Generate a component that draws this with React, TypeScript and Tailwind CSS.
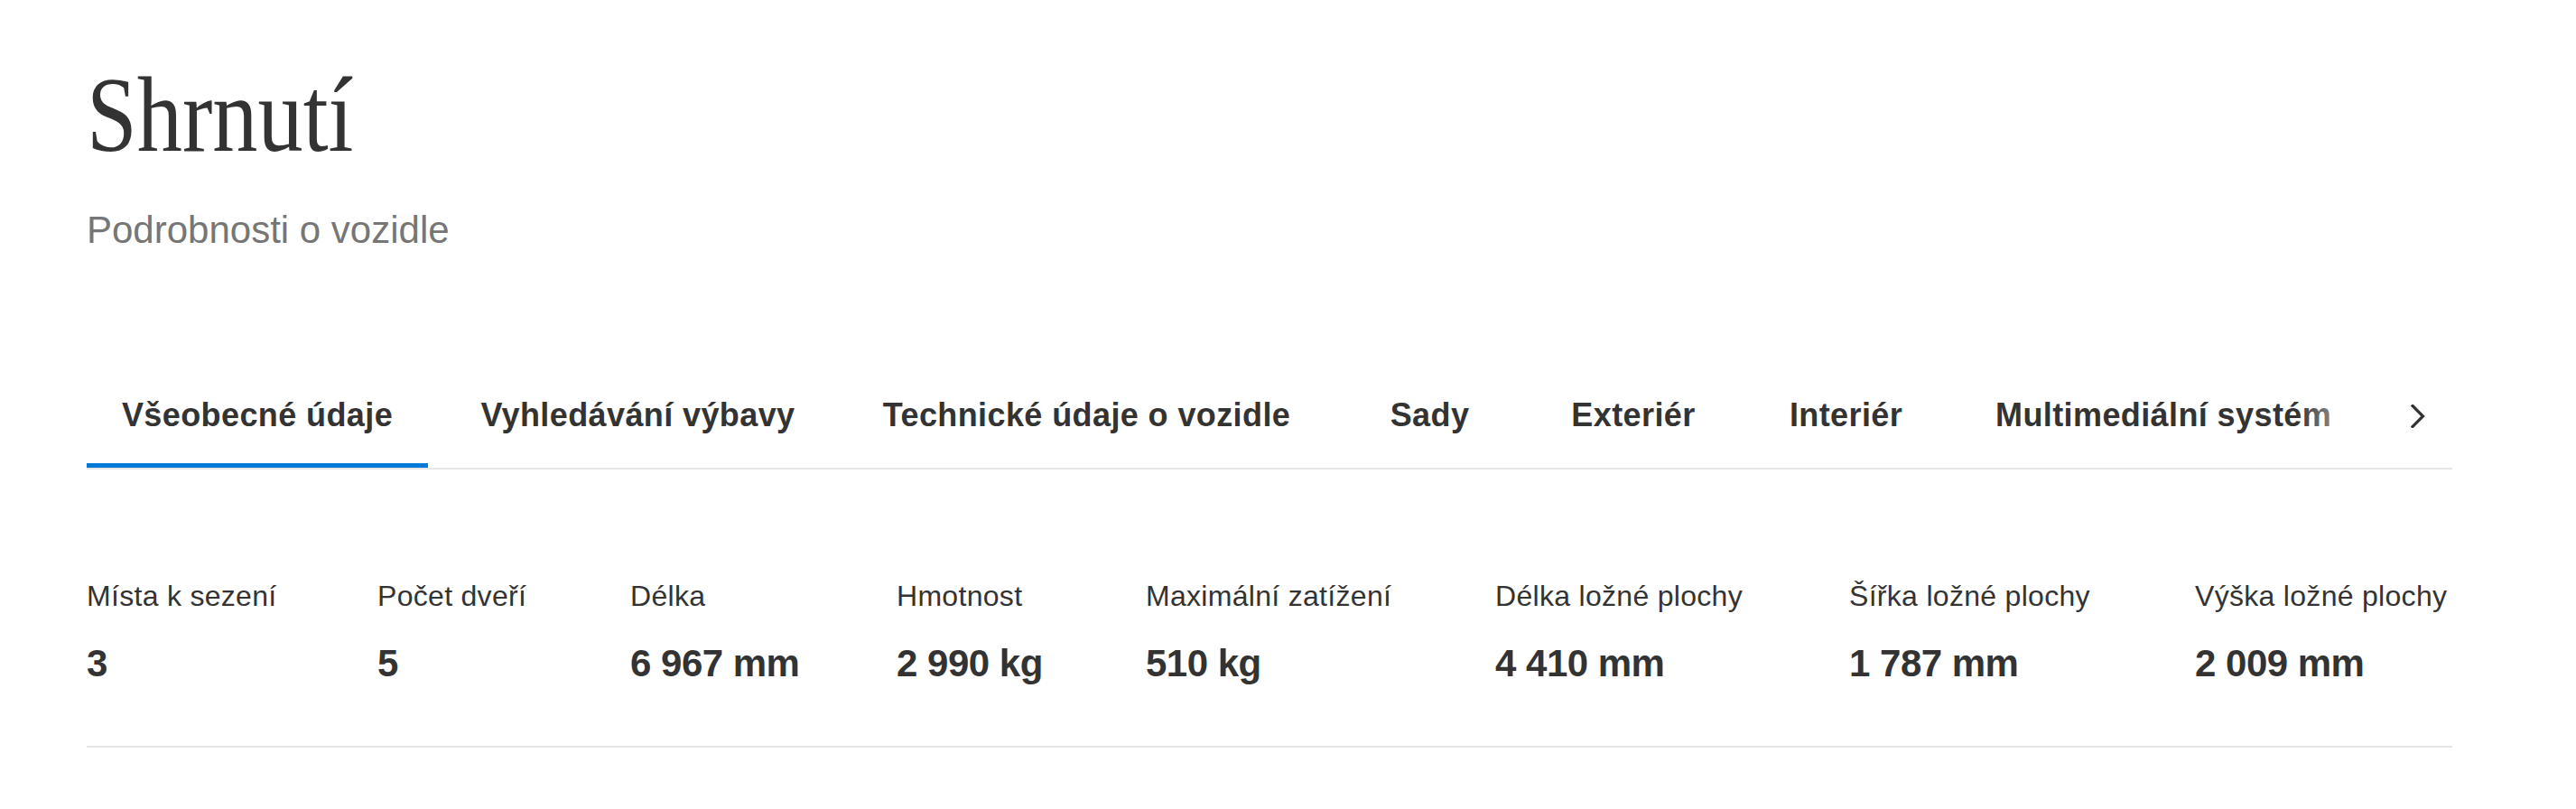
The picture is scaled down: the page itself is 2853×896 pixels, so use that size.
import React from 'react';

const tabs = [
    { label: 'Všeobecné údaje', width: 'w-[378px]', active: true },
    { label: 'Vyhledávání výbavy', width: 'w-[431px]' },
    { label: 'Technické údaje o vozidle', width: 'w-[529px]' },
    { label: 'Sady', width: 'w-[197px]' },
    { label: 'Exteriér', width: 'w-[220px]' },
    { label: 'Interiér', width: 'w-[217px]' },
    { label: 'Multimediální systém', width: 'px-10' },
];

const specs = [
    { label: 'Místa k sezení', value: '3' },
    { label: 'Počet dveří', value: '5' },
    { label: 'Délka', value: '6 967 mm' },
    { label: 'Hmotnost', value: '2 990 kg' },
    { label: 'Maximální zatížení', value: '510 kg' },
    { label: 'Délka ložné plochy', value: '4 410 mm' },
    { label: 'Šířka ložné plochy', value: '1 787 mm' },
    { label: 'Výška ložné plochy', value: '2 009 mm' },
];

const App: React.FC = () => {
    return (
        <div className="min-h-screen bg-white text-[#333333] font-['Liberation_Sans',Arial,sans-serif] pl-[96px] pr-[137px]">
            {/* Heading */}
            <h1 className="pt-[69px] text-[118px] leading-[118px] font-normal font-['Liberation_Serif','Times_New_Roman',serif]">
                <span className="inline-block origin-left scale-x-[0.85]">Shrnutí</span>
            </h1>
            <p className="mt-[44px] text-[42px] leading-[48px] text-[#767676]">Podrobnosti o vozidle</p>

            {/* Tabs */}
            <div className="mt-[159px] flex border-b-2 border-[#e5e5e5]">
                <div className="relative flex-1 overflow-hidden">
                    <div className="flex gap-[17px]">
                        {tabs.map(tab => (
                            <button
                                key={tab.label}
                                className={`shrink-0 ${tab.width} pb-[31px] border-b-[5px] text-center whitespace-nowrap text-[36px] leading-[44px] tracking-[0.4px] font-bold text-[#333333] ${tab.active ? 'border-[#0078d6]' : 'border-transparent'}`}
                            >
                                {tab.label}
                            </button>
                        ))}
                    </div>
                    <div className="pointer-events-none absolute right-0 top-0 bottom-0 w-[96px] bg-gradient-to-r from-white/0 to-white"></div>
                </div>
                <button className="w-[76px] h-[80px] flex items-start justify-center shrink-0">
                    <svg className="mt-[10px]" width="16" height="26" viewBox="0 0 16 26" fill="none">
                        <polyline points="2,1.5 13.5,13 2,24.5" stroke="#333333" strokeWidth="3.2" strokeLinecap="square" />
                    </svg>
                </button>
            </div>

            {/* Summary values */}
            <div className="mt-[120px] pb-[67px] grid grid-cols-[322px_280px_295px_276px_387px_392px_383px_285px] border-b-2 border-[#e5e5e5]">
                {specs.map(s => (
                    <div key={s.label} className="flex flex-col">
                        <span className="text-[32px] leading-[40px] tracking-[0.3px] whitespace-nowrap">{s.label}</span>
                        <span className="mt-[31px] text-[42px] leading-[48px] tracking-[-0.5px] font-bold whitespace-nowrap">{s.value}</span>
                    </div>
                ))}
            </div>
        </div>
    );
};

export default App;
